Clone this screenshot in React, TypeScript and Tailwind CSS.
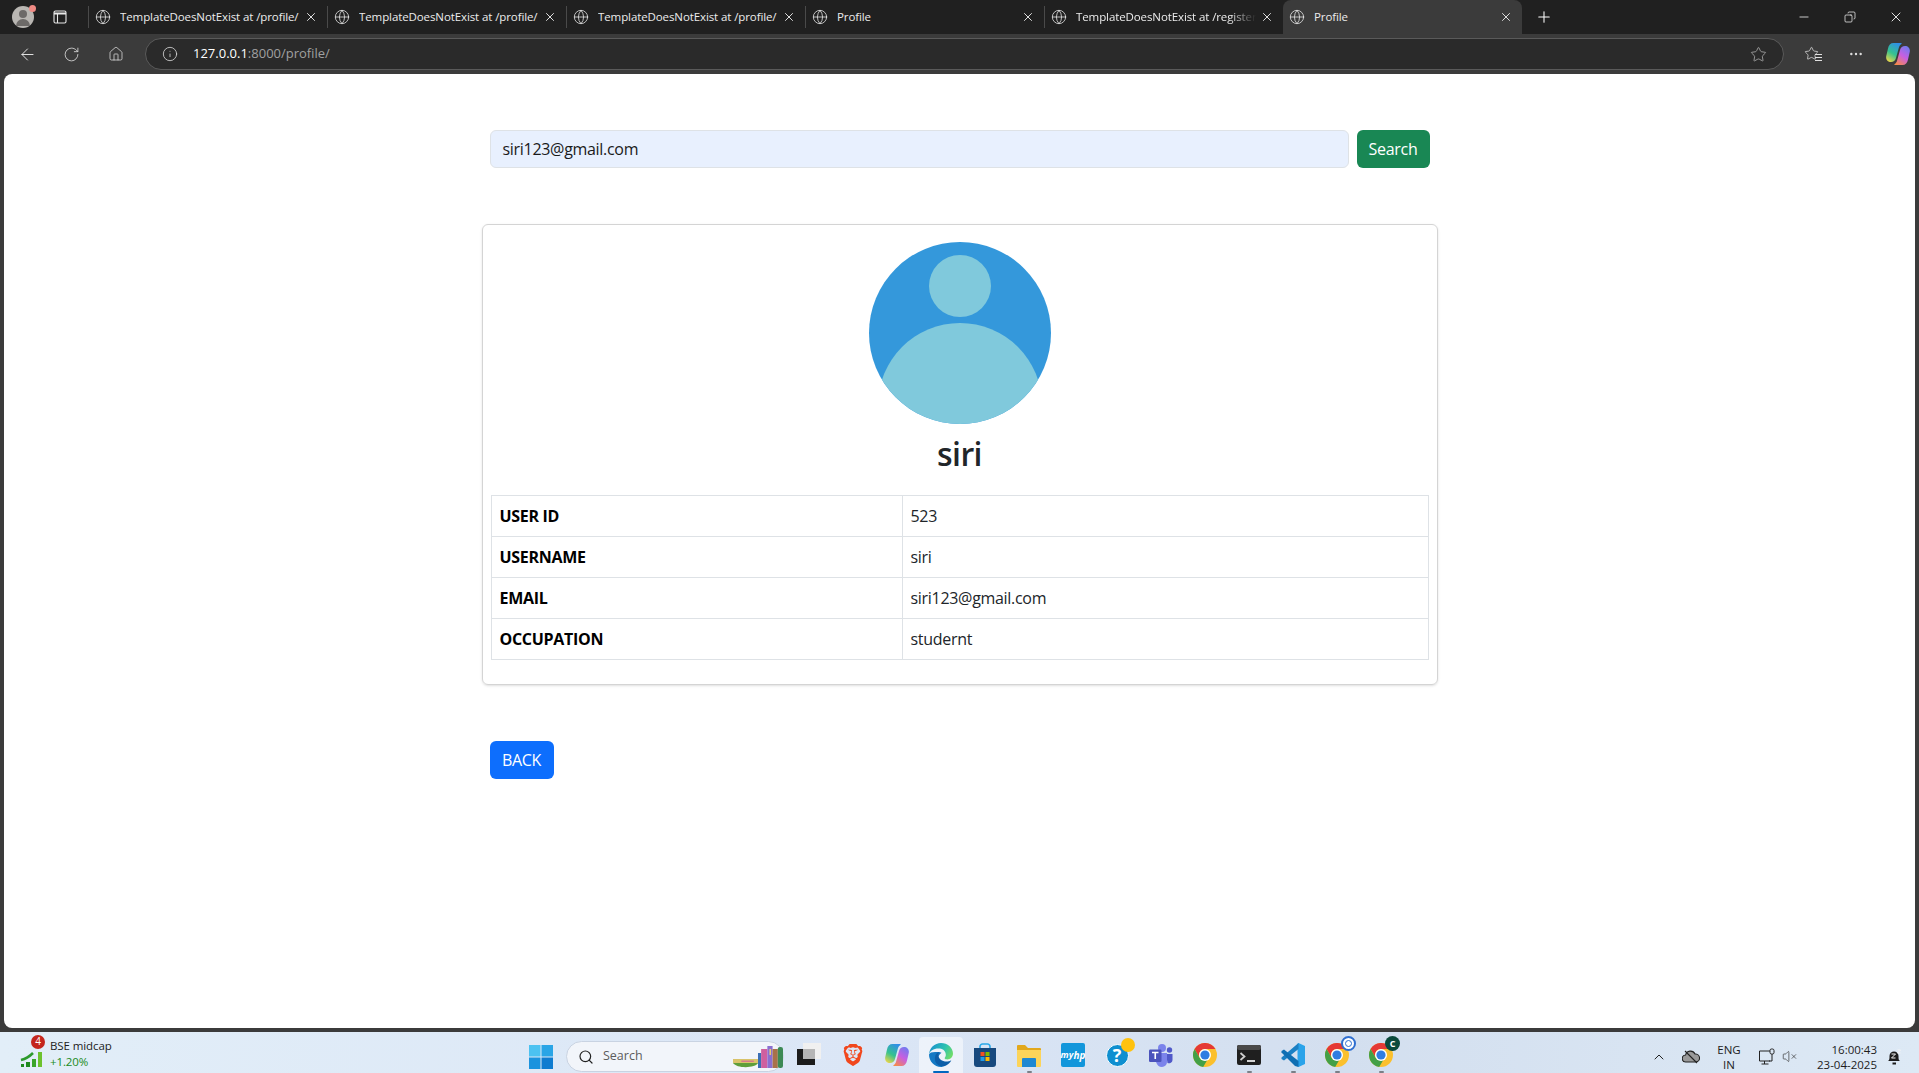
import React from 'react';
import { ArrowLeft, ChevronUp, Copy, Globe, Home, Info, Minus, MoreHorizontal, Plus, RotateCw, Search, Star, VolumeX, X } from 'lucide-react';
import { SiBrave } from 'react-icons/si';

const tabs = [
  { title: 'TemplateDoesNotExist at /profile/' },
  { title: 'TemplateDoesNotExist at /profile/' },
  { title: 'TemplateDoesNotExist at /profile/' },
  { title: 'Profile' },
  { title: 'TemplateDoesNotExist at /register/', fade: true },
  { title: 'Profile', active: true },
];

const rows = [
  ['USER ID', '523'],
  ['USERNAME', 'siri'],
  ['EMAIL', 'siri123@gmail.com'],
  ['OCCUPATION', 'studernt'],
];

const Copilot = ({ size = 24, id = 'cp' }: { size?: number; id?: string }) => (
  <svg width={size} height={size} viewBox="0 0 24 24">
    <defs>
      <linearGradient id={`${id}A`} x1="0.7" y1="0" x2="0.2" y2="1">
        <stop offset="0" stopColor="#2f8fe8" />
        <stop offset="0.55" stopColor="#35c28f" />
        <stop offset="1" stopColor="#e8d54a" />
      </linearGradient>
      <linearGradient id={`${id}B`} x1="0.8" y1="0" x2="0.2" y2="1">
        <stop offset="0" stopColor="#6f7bf0" />
        <stop offset="0.5" stopColor="#c85fe0" />
        <stop offset="1" stopColor="#f58a4a" />
      </linearGradient>
    </defs>
    <path d="M7.500 1H15c.8 0 1 .6.400 1-1.400.8-2 2-2.500 3.600L10 16c-.7 2.600-2.500 4-5 4-3.300 0-5.300-2.600-4.800-5.800L2 6.500C2.600 3 4.500 1 7.500 1z" fill={`url(#${id}A)`} />
    <path d="M16.500 23H9c-.8 0-1-.6-.4-1 1.400-.8 2-2 2.500-3.600L14 8c.7-2.600 2.500-4 5-4 3.300 0 5.300 2.600 4.800 5.800L22 17.500c-.6 3.500-2.500 5.500-5.500 5.500z" fill={`url(#${id}B)`} />
  </svg>
);

const Chrome = () => (
  <svg width="24" height="24" viewBox="0 0 24 24">
    <circle cx="12" cy="12" r="12" fill="#fbc02d" />
    <path d="M12 6h10.400A12 12 0 0 0 1.600 6l5.200 9A6 6 0 0 1 12 6z" fill="#e53935" />
    <path d="M6.800 15 1.600 6a12 12 0 0 0 8.600 17.900l5.200-9A6 6 0 0 1 6.800 15z" fill="#43a047" />
    <circle cx="12" cy="12" r="6" fill="#fff" />
    <circle cx="12" cy="12" r="4.600" fill="#2f7de1" />
  </svg>
);

const Edge = () => (
  <svg width="24" height="24" viewBox="0 0 24 24">
    <defs>
      <linearGradient id="edT" x1="0" y1="0.2" x2="1" y2="0.6">
        <stop offset="0" stopColor="#1a8fd0" />
        <stop offset="0.6" stopColor="#2cc3b0" />
        <stop offset="1" stopColor="#6fdc6a" />
      </linearGradient>
    </defs>
    <path d="M12 0C5.600 0 .3 5 0 11.500c.6-3.400 4.500-6 9.500-6 3.500 0 7 1.600 7.300 6 .1 1.300-.3 2.400-1 3.200-.3.4-.2.7-.1.9.4.5 1.400.9 2.400.9 3.500 0 5.900-2.600 5.900-5.900C24 4.700 18.500 0 12 0z" fill="url(#edT)" />
    <path d="M0 11.500C0 18.400 5.400 24 12 24c1 0 2.400-.1 3-.3-3-.6-5.600-3.400-6-6.500-.4-3 1-6 3.500-7.500-1-.4-2-.6-3-.6C4.500 8.600.6 9 0 11.500z" fill="#1379c4" />
    <path d="M21.800 17.500c-.9.5-2.900 1.100-4.300 1.100-4.400 0-8.200-3-8.200-6.900 0-1.100.6-2.100 1.600-2.600-4 .2-5 4.300-5 6.700 0 6.800 6.300 7.500 7.600 7.500.7 0 1.800-.2 2.500-.4 2.700-.9 4.900-2.700 6.300-5.400z" fill="#0c5ea8" />
  </svg>
);

const Store = () => (
  <svg width="24" height="24" viewBox="0 0 24 24">
    <path d="M7 5V3.500A2.500 2.500 0 0 1 9.500 1h5A2.500 2.500 0 0 1 17 3.500V5" fill="none" stroke="#29a8e8" strokeWidth="1.600" />
    <path d="M1 5h22v16a3 3 0 0 1-3 3H4a3 3 0 0 1-3-3z" fill="#17497e" />
    <rect x="7.500" y="9" width="4" height="4" fill="#f25022" />
    <rect x="12.500" y="9" width="4" height="4" fill="#7fba00" />
    <rect x="7.500" y="14" width="4" height="4" fill="#1e9be8" />
    <rect x="12.500" y="14" width="4" height="4" fill="#ffb900" />
  </svg>
);

const Folder = () => (
  <svg width="24" height="24" viewBox="0 0 24 24">
    <path d="M0 3a1 1 0 0 1 1-1h7l3 3h12a1 1 0 0 1 1 1v3H0z" fill="#e2a81c" />
    <path d="M0 7h24v16a1 1 0 0 1-1 1H1a1 1 0 0 1-1-1z" fill="#fcd45a" />
    <path d="M6 15h12a1 1 0 0 1 1 1v8H5v-8a1 1 0 0 1 1-1z" fill="#1e88d2" />
  </svg>
);

const Teams = () => (
  <svg width="24" height="24" viewBox="0 0 24 24">
    <circle cx="13" cy="5" r="4" fill="#7b83eb" />
    <circle cx="20.500" cy="7" r="2.700" fill="#5059c9" />
    <path d="M17 11h6.500v6a3.500 3.500 0 0 1-5 3z" fill="#5059c9" />
    <path d="M7 10h11v9a5 5 0 0 1-5 5c-3 0-5-2-6-5z" fill="#7b83eb" />
    <rect x="0" y="6.500" width="12.500" height="12.500" rx="1.200" fill="#4b53bc" />
    <path d="M3 9.500h6.500M6.250 9.500V16" stroke="#fff" strokeWidth="1.600" />
  </svg>
);

const Terminal = () => (
  <svg width="24" height="24" viewBox="0 0 24 24">
    <rect x="0" y="2" width="24" height="20" rx="2" fill="#1f1f1f" />
    <rect x="0" y="2" width="24" height="5" rx="2" fill="#4a4a4a" />
    <path d="m3.500 10 4 3.500-4 3.500" fill="none" stroke="#cfcfcf" strokeWidth="1.800" />
    <path d="M10 18h8" stroke="#e8e8e8" strokeWidth="1.800" />
  </svg>
);

const VsCode = () => (
  <svg width="24" height="24" viewBox="0 0 24 24">
    <path d="M17.500 0 24 3v18l-6.500 3-1-.8V.8z" fill="#2aa3ea" />
    <path d="M17.500 0v6L8 13.500 3 17.500.5 16v-1.500z" fill="#1b80c4" />
    <path d="M17.500 24v-6L3 6.500.5 8v1.500L14 23z" fill="#0f6fb3" />
  </svg>
);

const Tab = ({ title, active, fade }: { title: string; active?: boolean; fade?: boolean }) => (
  <div className={`relative flex w-[239px] shrink-0 items-center pl-[6px] pr-[9px] ${active ? 'h-full rounded-t-lg bg-[#3b3b3b]' : 'h-[22px] border-l border-[#4a4a4a]'}`}>
    <Globe className="h-4 w-4 shrink-0 text-[#e6e6e6]" strokeWidth={1.2} />
    <span className={`ml-[9px] flex-1 overflow-hidden whitespace-nowrap text-[11.5px] tracking-[-0.1px] text-[#ececec] ${fade ? '[mask-image:linear-gradient(90deg,#000_85%,transparent)]' : ''}`}>{title}</span>
    <X className="ml-1 h-[14px] w-[14px] shrink-0 text-[#e0e0e0]" strokeWidth={1.7} />
  </div>
);

const TaskIcon = ({ children, active, dot }: { children: React.ReactNode; active?: boolean; dot?: boolean }) => (
  <div className={`relative flex h-[36px] w-[44px] shrink-0 items-center justify-center self-end ${active ? 'rounded-t bg-white/50' : ''}`}>
    <div className="relative">{children}</div>
    {active && <span className="absolute bottom-0 h-[2px] w-[16px] rounded bg-[#0067c0]" />}
    {dot && <span className="absolute bottom-0 h-[2px] w-[5px] rounded bg-[#7a7f87]" />}
  </div>
);

const App = () => {
  return (
    <div className="flex h-[1073px] w-full flex-col overflow-hidden bg-[#3b3b3b] font-['Open_Sans',sans-serif]">
      {/* tab strip */}
      <div className="flex h-[34px] shrink-0 items-center bg-[#202020]">
        <div className="ml-[12px] flex h-[22px] w-[22px] shrink-0 items-center justify-center">
          <div className="relative h-[22px] w-[22px] overflow-visible rounded-full bg-[#b9b6b2]">
            <div className="absolute left-[7px] top-[4px] h-[8px] w-[8px] rounded-full bg-[#6d6a68]" />
            <div className="absolute bottom-[2px] left-[4px] h-[7px] w-[14px] rounded-t-full bg-[#6d6a68]" />
            <div className="absolute -right-[2px] -top-[1px] h-[7px] w-[7px] rounded-full bg-[#f08a84]" />
          </div>
        </div>
        <div className="ml-[13px] flex w-[41px] shrink-0 justify-start pl-[6px]">
          <svg width="14" height="14" viewBox="0 0 14 14" fill="none" stroke="#e8e8e8" strokeWidth="1.100">
            <rect x="1" y="1" width="12" height="12" rx="1.500" />
            <path d="M1 3.500h12" strokeWidth="2" />
            <path d="M4.500 3.500V13" />
          </svg>
        </div>
        <div className="flex h-full items-center">
          {tabs.map((tab, i) => (
            <Tab key={i} title={tab.title} active={tab.active} fade={tab.fade} />
          ))}
        </div>
        <Plus className="ml-[13px] h-[18px] w-[18px] text-white" strokeWidth={1.4} />
        <div className="ml-auto flex items-center">
          <div className="flex w-[46px] justify-center"><Minus className="h-[14px] w-[14px] text-white" strokeWidth={1.3} /></div>
          <div className="flex w-[46px] justify-center"><Copy className="h-[12px] w-[12px] -scale-x-100 text-white" strokeWidth={1.4} /></div>
          <div className="flex w-[46px] justify-center"><X className="h-[16px] w-[16px] text-white" strokeWidth={1.3} /></div>
        </div>
      </div>

      {/* toolbar */}
      <div className="flex h-[40px] shrink-0 items-center">
        <div className="flex w-[145px] shrink-0 items-center pl-[18px]">
          <ArrowLeft className="h-[19px] w-[19px] text-[#e8e8e8]" strokeWidth={1.2} />
          <RotateCw className="ml-[26px] h-[17px] w-[17px] text-[#d8d8d8]" strokeWidth={1.2} />
          <Home className="ml-[28px] h-[16px] w-[16px] text-[#d8d8d8]" strokeWidth={1.2} />
        </div>
        <div className="flex h-[32px] w-[1639px] shrink-0 items-center rounded-full border border-[#5a5a5a] bg-[#2a2a2a] pl-[16px] pr-[16px]">
          <Info className="h-[16px] w-[16px] text-[#dcdcdc]" strokeWidth={1.2} />
          <span className="ml-[15px] text-[13px] text-[#a0a0a0]"><span className="text-white">127.0.0.1</span>:8000/profile/</span>
          <Star className="ml-auto h-[17px] w-[17px] text-[#a8a8a8]" strokeWidth={1.2} />
        </div>
        <div className="relative ml-[20px] h-[17px] w-[18px]">
          <Star className="h-[15px] w-[15px] text-[#e0e0e0]" strokeWidth={1.2} />
          <div className="absolute bottom-[2px] right-0 flex w-[7px] flex-col gap-[2px]">
            <span className="h-px bg-[#e0e0e0]" /><span className="h-px bg-[#e0e0e0]" /><span className="h-px bg-[#e0e0e0]" />
          </div>
        </div>
        <MoreHorizontal className="ml-[26px] h-[16px] w-[16px] text-[#e0e0e0]" strokeWidth={1.6} />
        <div className="ml-[22px]"><Copilot size={24} id="cpBar" /></div>
      </div>

      {/* page */}
      <div className="mx-[4px] flex h-[954px] shrink-0 flex-col items-center rounded-lg bg-white pt-[56px] tracking-[-0.3px] text-[#212529]">
        <div className="w-[956px]">
          <div className="flex px-[8px]">
            <div className="flex h-[38px] flex-1 items-center rounded-md border border-[#dee2e6] bg-[#e8f0fe] px-[12px] text-[16px] text-[#1a1a1a]">siri123@gmail.com</div>
            <button className="ml-[8px] h-[38px] w-[73px] rounded-md bg-[#198754] text-[16px] text-white">Search</button>
          </div>

          <div className="mt-[56px] flex h-[461px] flex-col items-center rounded-md border border-[#d4d4d4] px-[8px] pt-[17px] shadow-sm">
            <svg width="182" height="182" viewBox="0 0 182 182">
              <defs>
                <clipPath id="avatarClip"><circle cx="91" cy="91" r="91" /></clipPath>
              </defs>
              <circle cx="91" cy="91" r="91" fill="#3498db" />
              <circle cx="91" cy="44" r="31" fill="#80c9dc" />
              <circle cx="91" cy="163" r="82" fill="#80c9dc" clipPath="url(#avatarClip)" />
            </svg>
            <h2 className="mt-[11px] text-[32px] font-semibold leading-[38px] tracking-[-0.6px] text-[#212529]">siri</h2>
            <table className="mt-[22px] w-full border-collapse text-[16px]">
              <tbody>
                {rows.map(([label, value]) => (
                  <tr key={label} className="h-[41px]">
                    <td className="w-[411px] border border-[#dee2e6] px-[8px] font-bold text-black">{label}</td>
                    <td className="border border-[#dee2e6] px-[8px]">{value}</td>
                  </tr>
                ))}
              </tbody>
            </table>
          </div>

          <div className="mt-[56px] px-[8px]">
            <button className="h-[38px] w-[64px] rounded-md bg-[#0d6efd] text-[16px] text-white">BACK</button>
          </div>
        </div>
      </div>

      {/* taskbar */}
      <div className="mt-[4px] flex h-[41px] shrink-0 items-center bg-[linear-gradient(90deg,#e2eef8,#dbe6f6_45%,#d3dfef_70%,#dde9f5)] pt-[8px] text-[#1c1c1c]">
        <div className="relative ml-[20px] h-[24px] w-[30px] shrink-0">
          <svg width="24" height="24" viewBox="0 0 24 24">
            <rect x="1" y="19" width="3" height="3" fill="#1f8a1f" />
            <rect x="6" y="17" width="4" height="5" fill="#1f8a1f" />
            <rect x="12" y="14" width="4" height="8" fill="#3aa52a" />
            <rect x="18" y="7" width="4" height="15" fill="#6cc22e" />
            <path d="M1 15c4-1 8-3 12-7" fill="none" stroke="#2c9a2c" strokeWidth="2.500" />
          </svg>
          <span className="absolute left-[11px] -top-[10px] flex h-[14px] w-[14px] items-center justify-center rounded-full bg-[#c4261d] text-[10px] text-white">4</span>
        </div>
        <div className="-mt-[5px] w-[479px] shrink-0 text-[11.5px] leading-[16px] tracking-[-0.1px]">
          <div>BSE midcap</div>
          <div className="text-[#1a8a1a]">+1.20%</div>
        </div>
        <svg width="24" height="24" viewBox="0 0 24 24" className="shrink-0">
          <rect x="0" y="0" width="11.500" height="11.500" fill="#4cc2f1" />
          <rect x="12.500" y="0" width="11.500" height="11.500" fill="#2aa5e6" />
          <rect x="0" y="12.500" width="11.500" height="11.500" fill="#1b93de" />
          <rect x="12.500" y="12.500" width="11.500" height="11.500" fill="#0f7cd0" />
        </svg>
        <div className="relative ml-[13px] flex h-[31px] w-[218px] shrink-0 items-center rounded-full border border-[#c9d3e2] bg-[#f2f5fa] pl-[11px]">
          <Search className="h-[16px] w-[16px] text-[#222]" strokeWidth={1.8} />
          <span className="ml-[9px] text-[12.5px] text-[#5c5c5c]">Search</span>
          <svg width="50" height="23" viewBox="0 0 48 23" preserveAspectRatio="none" className="absolute bottom-[2px] right-0">
            <path d="M0 14h24v3c-2 5-20 6-24 0z" fill="#5f9e3a" />
            <rect x="0" y="13" width="24" height="4" fill="#d9c36a" />
            <rect x="8" y="14.500" width="12" height="1.500" fill="#d67a8c" />
            <rect x="24" y="7" width="3" height="15" fill="#3b6fb5" />
            <rect x="27" y="3" width="6" height="19" fill="#cf5f9f" />
            <rect x="33" y="0" width="5" height="22" fill="#8b6fd0" />
            <rect x="35" y="3" width="1.500" height="6" fill="#e8d06a" />
            <rect x="38" y="3" width="5" height="19" fill="#a9714a" />
            <rect x="43" y="1" width="5" height="21" rx="2" fill="#3d8a55" />
          </svg>
        </div>
        <div className="ml-[3px] -mt-[8px] flex h-[41px] items-center">
          <TaskIcon>
            <svg width="24" height="24" viewBox="0 0 24 24">
              <rect x="0" y="6" width="18" height="16" fill="#1c1c1c" />
              <rect x="6" y="0" width="18" height="16" fill="#f0f0f0" />
              <rect x="6" y="6" width="12" height="10" fill="#b5b5b5" />
            </svg>
          </TaskIcon>
          <TaskIcon><SiBrave className="h-[24px] w-[22px] text-[#f1471d]" /></TaskIcon>
          <TaskIcon><Copilot id="cpTask" /></TaskIcon>
          <TaskIcon active><Edge /></TaskIcon>
          <TaskIcon><Store /></TaskIcon>
          <TaskIcon dot><Folder /></TaskIcon>
          <TaskIcon>
            <div className="flex h-[24px] w-[24px] items-center justify-center rounded-[2px] bg-[#1296db] text-[9px] font-bold italic text-white">my<span className="text-[10px]">hp</span></div>
          </TaskIcon>
          <TaskIcon>
            <div className="relative flex h-[23px] w-[23px] items-center justify-center rounded-full border border-white bg-[#0f8fd0] text-[18px] font-bold text-white">?</div>
            <span className="absolute -right-[6px] -top-[6px] h-[14px] w-[14px] rounded-full bg-[#ffc20e]" />
          </TaskIcon>
          <TaskIcon><Teams /></TaskIcon>
          <TaskIcon><Chrome /></TaskIcon>
          <TaskIcon dot><Terminal /></TaskIcon>
          <TaskIcon dot><VsCode /></TaskIcon>
          <TaskIcon dot>
            <Chrome />
            <span className="absolute -right-[7px] -top-[7px] flex h-[15px] w-[15px] items-center justify-center rounded-full border-2 border-[#2f6fd0] bg-white">
              <span className="h-[7px] w-[7px] rounded-full border border-[#2f6fd0]" />
            </span>
          </TaskIcon>
          <TaskIcon dot>
            <Chrome />
            <span className="absolute -right-[7px] -top-[7px] flex h-[15px] w-[15px] items-center justify-center rounded-full bg-[#0a4a3c] text-[9px] font-bold text-white">C</span>
          </TaskIcon>
        </div>
        <div className="ml-auto flex items-center">
          <ChevronUp className="h-[16px] w-[16px] text-[#222]" strokeWidth={1.5} />
          <svg width="18" height="14" viewBox="0 0 18 14" className="ml-[15px]" fill="#999" stroke="#222" strokeWidth="1.100">
            <path d="M4 12a3.500 3.500 0 0 1-.4-7A5 5 0 0 1 13 4a3.500 3.500 0 0 1 1 8z" />
            <path d="M3 1l12 12" fill="none" />
          </svg>
          <div className="ml-[15px] w-[28px] text-center text-[11.5px] leading-[15px]"><div>ENG</div><div>IN</div></div>
          <svg width="18" height="18" viewBox="0 0 18 18" fill="none" stroke="#222" className="ml-[15px]">
            <path d="M12 3H1.500v10H12M6.500 13v3M3.500 16h7" />
            <rect x="12" y="1" width="4" height="5" rx="1.500" />
            <path d="M14 6v7h-3" />
          </svg>
          <VolumeX className="ml-[6px] h-[15px] w-[15px] text-[#333]" strokeWidth={1.1} />
          <div className="ml-[10px] w-[70px] text-right text-[11.5px] leading-[15px]">
            <div>16:00:43</div>
            <div>23-04-2025</div>
          </div>
          <svg width="15" height="16" viewBox="0 0 15 16" className="ml-[10px] mr-[17px]">
            <path d="M1 12c1.500-1 1.500-2 1.500-5a4.500 4.500 0 0 1 9 0c0 3 0 4 1.500 5z" fill="#1c1c1c" />
            <rect x="5.500" y="13.500" width="3.500" height="2" fill="#1c1c1c" />
            <path d="M4.500 5h4L4.500 9h4M10.500 1h3l-3 3h3" fill="none" stroke="#f4f4f4" strokeWidth="1" />
          </svg>
        </div>
      </div>
    </div>
  );
};

export default App;
